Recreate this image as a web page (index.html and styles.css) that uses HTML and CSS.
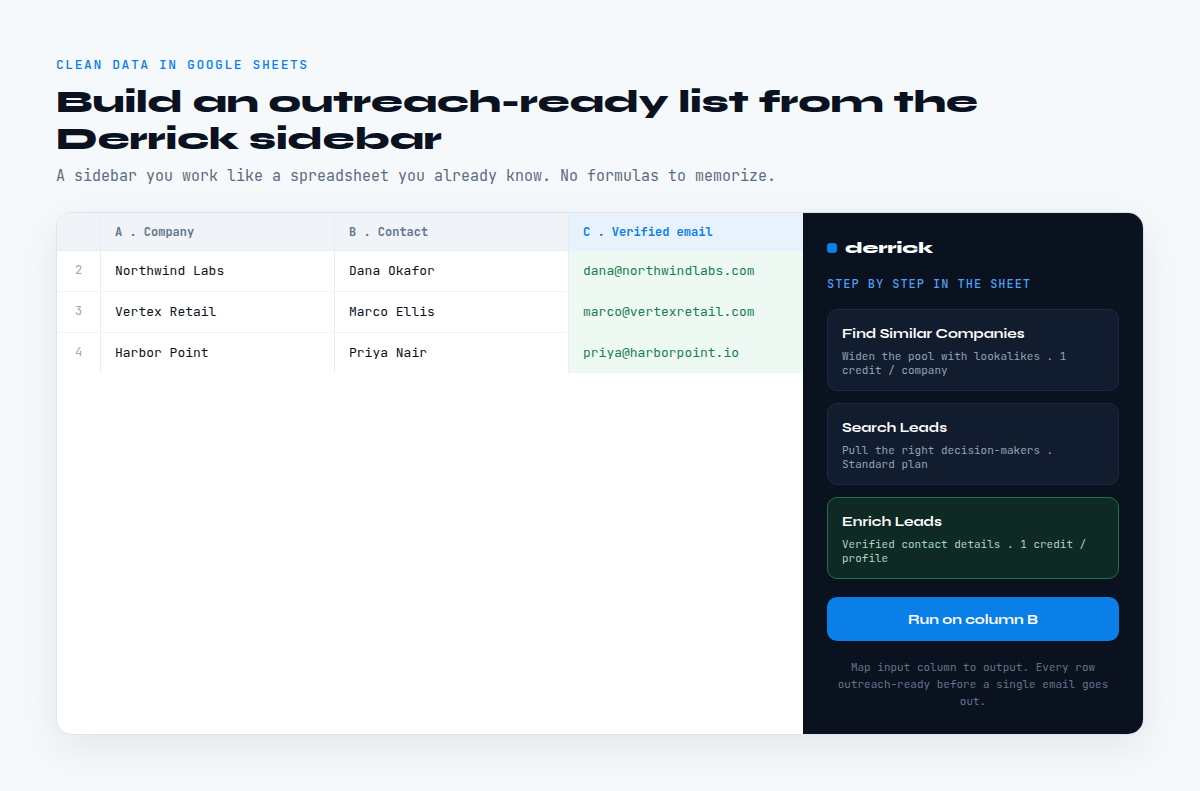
FILE: index.html
```
<!DOCTYPE html>
<html lang="en">
<head>
    <meta charset="UTF-8">
    <meta name="viewport" content="width=device-width, initial-scale=1.0">
    <title>Derrick sidebar</title>
    <link rel="stylesheet" href="styles.css">
</head>
<body>
    <header class="intro">
        <p class="eyebrow">CLEAN DATA IN GOOGLE SHEETS</p>
        <h1>Build an outreach-ready list from the Derrick sidebar</h1>
        <p class="subtitle">A sidebar you work like a spreadsheet you already know. No formulas to memorize.</p>
    </header>

    <main class="window">
        <div class="sheet">
            <table>
                <thead>
                    <tr>
                        <th class="row-number"></th>
                        <th>A . Company</th>
                        <th>B . Contact</th>
                        <th class="email">C . Verified email</th>
                    </tr>
                </thead>
                <tbody>
                    <tr>
                        <td class="row-number">2</td>
                        <td>Northwind Labs</td>
                        <td>Dana Okafor</td>
                        <td class="email">dana@northwindlabs.com</td>
                    </tr>
                    <tr>
                        <td class="row-number">3</td>
                        <td>Vertex Retail</td>
                        <td>Marco Ellis</td>
                        <td class="email">marco@vertexretail.com</td>
                    </tr>
                    <tr>
                        <td class="row-number">4</td>
                        <td>Harbor Point</td>
                        <td>Priya Nair</td>
                        <td class="email">priya@harborpoint.io</td>
                    </tr>
                </tbody>
            </table>
        </div>

        <aside class="sidebar">
            <div class="brand"><span class="brand-mark"></span>derrick</div>
            <h2>STEP BY STEP IN THE SHEET</h2>
            <div class="steps">
                <div class="step">
                    <h3>Find Similar Companies</h3>
                    <p>Widen the pool with lookalikes . 1 credit / company</p>
                </div>
                <div class="step">
                    <h3>Search Leads</h3>
                    <p>Pull the right decision-makers . Standard plan</p>
                </div>
                <div class="step active">
                    <h3>Enrich Leads</h3>
                    <p>Verified contact details . 1 credit / profile</p>
                </div>
            </div>
            <button type="button" class="run">Run on column B</button>
            <p class="note">Map input column to output. Every row outreach-ready before a single email goes out.</p>
        </aside>
    </main>
</body>
</html>
```
FILE: styles.css
```
* {
    box-sizing: border-box;
}
body {
    display: flex;
    flex-direction: column;
    min-height: 100vh;
    margin: 0;
    padding: 56px;
    background-color: #f5f9fc;
    color: #0a111f;
    font-family: "JetBrains Mono", "DejaVu Sans Mono", monospace;
}
h1, h2, h3, p {
    margin: 0;
}
h1, h3, .brand, .run {
    font-family: Syne, "DejaVu Sans", sans-serif;
}

/* Intro */
.intro {
    margin-bottom: 26px;
}
.eyebrow {
    color: #0b7fe8;
    font-size: 13px;
    font-weight: 500;
    line-height: 17px;
    letter-spacing: 0.12em;
}
h1 {
    margin: 10px 0 9px;
    font-size: 32px;
    font-weight: 800;
    line-height: 37px;
}
.subtitle {
    color: #5d6b80;
    font-size: 15px;
    line-height: 20px;
}

/* Spreadsheet and sidebar */
.window {
    display: flex;
    flex: 1;
    overflow: hidden;
    background-color: #ffffff;
    border: 1px solid #dce5ef;
    border-radius: 16px;
    box-shadow: 0 12px 40px rgba(10, 17, 31, 0.08);
}
.sheet {
    flex: 1;
    min-width: 0;
}
table {
    width: 100%;
    table-layout: fixed;
    border-collapse: separate;
    border-spacing: 0;
}
th, td {
    padding: 0 14px;
    border-right: 1px solid #e6edf4;
    text-align: left;
}
th {
    height: 38px;
    background-color: #f0f4f9;
    border-bottom: 1px solid #e2eaf2;
    color: #64748b;
    font-size: 12px;
    font-weight: 600;
}
td {
    height: 41px;
    padding-bottom: 2px;
    border-bottom: 1px solid #f2f6fa;
    font-size: 13px;
}
tbody tr:last-child td {
    height: 40px;
    border-bottom: none;
}
.row-number {
    width: 44px;
    padding-left: 0;
    padding-right: 0;
    text-align: center;
}
td.row-number {
    color: #9aa5b5;
    font-size: 12px;
}
.email {
    border-right: none;
}
th.email {
    background-color: #e7f2fc;
    border-bottom-color: #e7f2fc;
    color: #0b7fe8;
}
td.email {
    background-color: #eef9f4;
    border-bottom-color: #eef9f4;
    color: #15804f;
}

.sidebar {
    width: 340px;
    padding: 24px;
    background-color: #0a111f;
}
.brand {
    display: flex;
    align-items: center;
    gap: 8px;
    color: #ffffff;
    font-size: 16px;
    font-weight: 800;
    line-height: 22px;
}
.brand-mark {
    width: 10px;
    height: 10px;
    background-color: #0b7fe8;
    border-radius: 3px;
}
h2 {
    margin: 18px 0;
    color: #4f9ff0;
    font-size: 12px;
    font-weight: 500;
    line-height: 14px;
    letter-spacing: 0.08em;
}
.steps {
    display: grid;
    gap: 12px;
}
.step {
    padding: 15px 14px 13px;
    background-color: #111c2e;
    border: 1px solid #1d2a3f;
    border-radius: 10px;
}
.step h3 {
    margin-bottom: 6px;
    color: #ffffff;
    font-size: 14px;
    font-weight: 700;
    line-height: 18px;
}
.step p {
    color: #94a3b8;
    font-size: 11px;
    line-height: 14px;
}
.step.active {
    background-color: #0f2a24;
    border-color: #1f6f50;
}
.step.active p {
    color: #a7d8c0;
}
.run {
    width: 100%;
    height: 44px;
    margin: 18px 0;
    background-color: #0b7fe8;
    border: none;
    border-radius: 10px;
    color: #ffffff;
    font-size: 14px;
    font-weight: 700;
    cursor: pointer;
}
.note {
    color: #64748b;
    font-size: 11px;
    line-height: 17px;
    text-align: center;
}
```
